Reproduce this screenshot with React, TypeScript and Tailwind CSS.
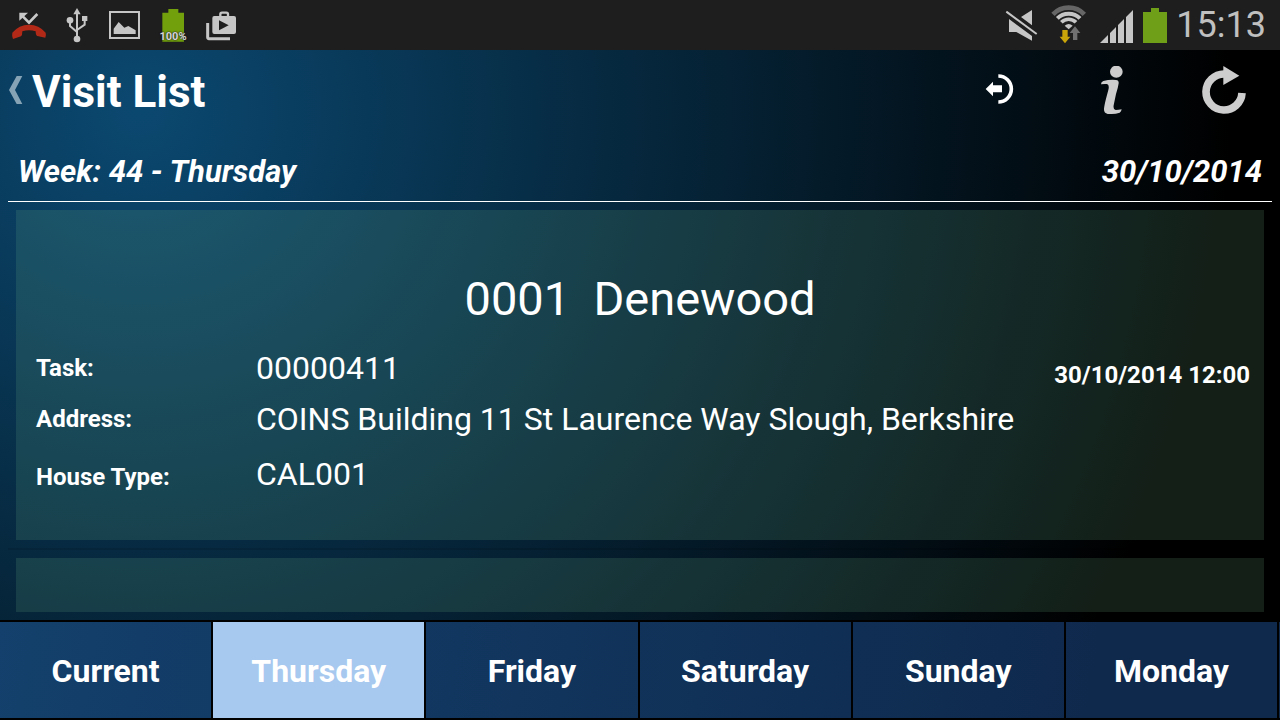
import React from "react";

const DAYS = ["Current", "Thursday", "Friday", "Saturday", "Sunday", "Monday"];

function MissedCallIcon() {
  return (
    <svg viewBox="15 0 144 150" className="h-[50px] w-12" aria-hidden="true">
      <path d="M58 38H84L58 62Z" fill="#c8c8c8" />
      <path d="M66 47L87 68L112 42" fill="none" stroke="#c8c8c8" strokeWidth="8" />
      <path
        d="M37 98Q57 74 87 74Q117 74 137 98Q139 105 136 113L112 108Q107 106 107 94Q87 87 67 94Q67 106 63 109L39 117Q35 106 37 98Z"
        fill="#b32918"
      />
    </svg>
  );
}

function UsbIcon() {
  return (
    <svg viewBox="159 0 144 150" className="h-[50px] w-12" aria-hidden="true">
      <g fill="#c6c6c6">
        <path d="M231 24L242 43H220Z" />
        <circle cx="231" cy="117" r="10" />
        <circle cx="210" cy="61" r="10" />
        <rect x="246" y="48" width="16" height="15" />
      </g>
      <path d="M231 40V112M210 62V78L231 96M254 60V74L231 90" fill="none" stroke="#c6c6c6" strokeWidth="6" />
    </svg>
  );
}

function PictureIcon() {
  return (
    <svg viewBox="303 0 144 150" className="h-[50px] w-12" aria-hidden="true">
      <rect x="330" y="36" width="87" height="78" fill="none" stroke="#c6c6c6" strokeWidth="6" />
      <path d="M341 102V86L356 66L373 83L385 78L407 91V102Z" fill="#c6c6c6" />
    </svg>
  );
}

function BatteryLevelIcon() {
  return (
    <div className="relative h-[50px] w-12">
      <svg viewBox="447 0 144 150" className="h-[50px] w-12" aria-hidden="true">
        <path d="M505 27H535V38H552V125H487V38H505Z" fill="#72a00c" />
      </svg>
      <span className="absolute inset-x-0 bottom-[7px] text-center text-[11px] leading-3 font-bold text-[#d6d6d6] [text-shadow:0_0_2px_#1e1e1e,0_0_1px_#1e1e1e]">
        100%
      </span>
    </div>
  );
}

function PlayStoreIcon() {
  return (
    <svg viewBox="591 0 144 150" className="h-[50px] w-12" aria-hidden="true">
      <path d="M623 69V112Q623 116 627 116H690" fill="none" stroke="#c6c6c6" strokeWidth="9" />
      <path d="M661 52V43Q661 38 666 38H679Q684 38 684 43V52" fill="none" stroke="#c6c6c6" strokeWidth="7" />
      <rect x="637" y="48" width="71" height="54" rx="6" fill="#c6c6c6" />
      <path d="M657 61L686 76L657 91Z" fill="#1e1e1e" />
    </svg>
  );
}

function MutedIcon() {
  return (
    <svg viewBox="90 0 132 150" className="h-[50px] w-11" aria-hidden="true">
      <path d="M186 30V76L153 51ZM117 57L186 108V122L139 96H117Z" fill="#c6c6c6" />
      <path d="M109 35L200 102" stroke="#c6c6c6" strokeWidth="6" />
    </svg>
  );
}

function WifiIcon() {
  return (
    <svg viewBox="222 0 144 150" className="h-[50px] w-12" aria-hidden="true">
      <g fill="none">
        <path d="M249 43A65 65 0 0 1 343 43" stroke="#666" strokeWidth="14" />
        <path d="M262 55A48 48 0 0 1 330 55" stroke="#c6c6c6" strokeWidth="12" />
        <path d="M274 67A31 31 0 0 1 318 67" stroke="#c6c6c6" strokeWidth="11" />
      </g>
      <path d="M284 77Q296 67 308 77L296 88Z" fill="#c6c6c6" />
      <path d="M277 90H293V110H301L285 130L269 110H277Z" fill="#c9a50a" />
      <path d="M309 120V99H299L315 79L331 99H322V120Z" fill="#707070" />
    </svg>
  );
}

function SignalIcon() {
  return (
    <svg viewBox="366 0 138 150" className="h-[50px] w-[46px]" aria-hidden="true">
      <path
        d="M390 129L414 105V129ZM420 99L438 81V129H420ZM444 75L462 57V129H444ZM468 51L489 30V129H468Z"
        fill="#c6c6c6"
      />
    </svg>
  );
}

function BatteryIcon() {
  return (
    <svg viewBox="504 0 102 150" className="h-[50px] w-[34px]" aria-hidden="true">
      <path d="M543 24H567V36H591V129H519V36H543Z" fill="#6f9f18" />
    </svg>
  );
}

function LogoutIcon() {
  return (
    <svg viewBox="18 198 144 144" className="size-12" aria-hidden="true">
      <path d="M85 228A39 39 0 0 1 85 306" fill="none" stroke="#fff" strokeWidth="11" />
      <path d="M47 267L69 245V256H96V277H69V289Z" fill="#fff" />
    </svg>
  );
}

function InfoIcon() {
  return (
    <svg viewBox="354 198 144 144" className="size-12" aria-hidden="true">
      <g fill="#cdcdcd">
        <ellipse cx="439" cy="215" rx="19" ry="18" />
        <path d="M393 253Q393 246 400 243Q420 238 438 240Q447 241 446 250Q444 264 438 282L431 316Q429 329 437 330Q445 330 455 328Q454 335 449 338Q432 343 413 342Q401 340 402 326Q403 316 408 296L415 270Q419 254 411 252Q402 251 393 253Z" />
      </g>
    </svg>
  );
}

function RefreshIcon() {
  return (
    <svg viewBox="690 198 144 144" className="size-12" aria-hidden="true">
      <path d="M816 279A54 54 0 1 1 763 222" fill="none" stroke="#cdcdcd" strokeWidth="23" />
      <path d="M760 198L808 227L760 255Z" fill="#cdcdcd" />
    </svg>
  );
}

function StatusBar() {
  return (
    <div className="flex h-[50px] shrink-0 justify-between bg-[#1e1e1e] pl-[5px]">
      <div className="flex">
        <MissedCallIcon />
        <UsbIcon />
        <PictureIcon />
        <BatteryLevelIcon />
        <PlayStoreIcon />
      </div>
      <div className="flex">
        <MutedIcon />
        <WifiIcon />
        <SignalIcon />
        <BatteryIcon />
        <time className="w-[108px] pr-3.5 text-right text-[36px] leading-[50px] text-[#c0c0c0]">15:13</time>
      </div>
    </div>
  );
}

function Header() {
  const action = "flex h-20 w-28 items-center justify-center";
  return (
    <header className="flex h-[84px] shrink-0 justify-between">
      <div className="flex items-center">
        <button type="button" aria-label="Back" className="w-8 pb-1 pl-2">
          <svg viewBox="24 228 48 84" className="h-7 w-4" aria-hidden="true">
            <path d="M50 228H67L45 270L67 312H50L27 270Z" fill="#86a3b6" />
          </svg>
        </button>
        <h1 className="text-[44px] leading-[52px] font-bold">Visit List</h1>
      </div>
      <div className="flex">
        <button type="button" aria-label="Log out" className={action}>
          <LogoutIcon />
        </button>
        <button type="button" aria-label="Information" className={action}>
          <InfoIcon />
        </button>
        <button type="button" aria-label="Refresh" className={action}>
          <RefreshIcon />
        </button>
      </div>
    </header>
  );
}

function VisitCard() {
  const label = "w-[220px] shrink-0 text-[24px] font-bold";
  return (
    <article className="shrink-0 bg-[rgba(112,182,135,0.17)] pt-[60px] pr-3.5 pb-[38px] pl-5">
      <h2 className="mb-4 pr-1.5 text-center text-[47px] leading-[58px] whitespace-pre">0001  Denewood</h2>
      <dl className="text-[32px]">
        <div className="flex h-12 items-center">
          <dt className={label}>Task:</dt>
          <dd className="flex-1">00000411</dd>
          <dd className="pt-3.5 text-[24px] font-bold">30/10/2014 12:00</dd>
        </div>
        <div className="flex h-[54px] items-center">
          <dt className={label}>Address:</dt>
          <dd>COINS Building 11 St Laurence Way Slough, Berkshire</dd>
        </div>
        <div className="flex h-14 items-center">
          <dt className="w-[220px] shrink-0 pt-1.5 text-[24px] font-bold">House Type:</dt>
          <dd>CAL001</dd>
        </div>
      </dl>
    </article>
  );
}

function DayTabs() {
  return (
    <nav className="grid h-[100px] shrink-0 grid-cols-6 border-y-2 border-black bg-linear-[100deg] from-[#13406c] to-[#0f294d] to-85% pr-px">
      {DAYS.map((day) => (
        <button
          key={day}
          type="button"
          aria-pressed={day === "Thursday"}
          className="border-r-2 border-black pt-0.5 text-[32px] font-bold aria-pressed:bg-[#a7c8ef]"
        >
          {day}
        </button>
      ))}
    </nav>
  );
}

export default function App() {
  return (
    <div className="flex h-screen flex-col bg-black font-[Roboto,sans-serif] text-white">
      <StatusBar />
      <main className="flex min-h-0 flex-1 flex-col bg-[radial-gradient(ellipse_1090px_1060px_at_140px_60px,#0b4870,#000)]">
        <Header />
        <div className="mx-2 flex h-[68px] shrink-0 items-center justify-between border-b border-white px-2.5 pt-2 text-[31px] leading-10 font-bold italic">
          <span>Week: 44 - Thursday</span>
          <time>30/10/2014</time>
        </div>
        <section aria-label="Visits" className="flex min-h-0 flex-1 flex-col overflow-hidden px-4 py-2">
          <VisitCard />
          <div className="-mx-2 my-2 h-0.5 shrink-0 bg-black/10" />
          <article className="min-h-0 flex-1 bg-[rgba(112,182,135,0.17)]" />
        </section>
      </main>
      <DayTabs />
    </div>
  );
}
